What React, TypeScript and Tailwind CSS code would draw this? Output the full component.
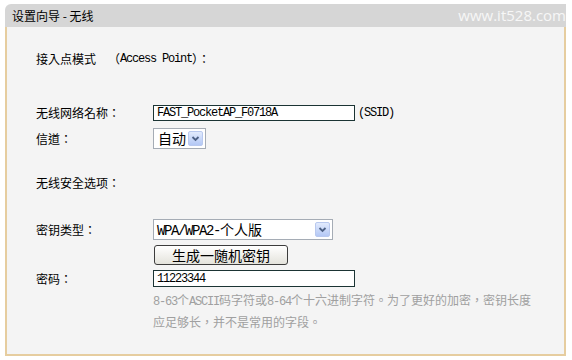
import React from "react";

const cjk = "font-['Noto_Sans_CJK_TC',sans-serif]";
const mono12 = "font-['Liberation_Mono','Noto_Sans_CJK_TC',monospace] text-[12px] tracking-[-1.2px]";
const mono14 = "font-['Liberation_Mono','Noto_Sans_CJK_TC',monospace] text-[14px] tracking-[-1.4px]";

function Arrow() {
  return (
    <span className="flex h-[15px] w-[15px] items-center justify-center rounded-[2px] border border-[#b9c9ef] bg-gradient-to-b from-[#e2ebfd] to-[#b4c8f5]">
      <svg width="9" height="7" viewBox="0 0 9 7">
        <path d="M1.5 2 L4.5 5 L7.5 2" fill="none" stroke="#4d6185" strokeWidth="1.8" />
      </svg>
    </span>
  );
}

function Label({ children }: { children: React.ReactNode }) {
  return <div className={`w-[117px] shrink-0 text-[12px] leading-[16px] text-black ${cjk}`}>{children}</div>;
}

export default function App() {
  return (
    <div className="h-[360px] w-[572px] overflow-hidden bg-white pl-[5px] pt-[4px]">
      <div className="flex h-[352px] w-[561px] flex-col">
        <div className="flex h-[23px] shrink-0 items-center justify-between rounded-tl-[6px] bg-[#d6d6d6] pl-[7px]">
          <span className={`text-[12px] text-black ${cjk}`}>设置向导 - 无线</span>
          <span className="font-['Open_Sans',sans-serif] text-[15px] leading-none text-[#f7f7f7]">www.it528.com</span>
        </div>
        <div className="flex flex-1 flex-col border-b-2 border-l-2 border-r-2 border-[#e6cd9f] bg-[#f4f4f4] pl-[29px]">
          <div className="mt-[24px] flex h-[16px] items-center text-[12px] text-black">
            <span className={cjk}>接入点模式</span>
            <span className={`ml-[12px] ${cjk}`}>（</span>
            <span className={mono12}>Access Point</span>
            <span className={cjk}>）：</span>
          </div>

          <div className="mt-[38px] flex h-[16px] items-center">
            <Label>无线网络名称：</Label>
            <div className={`flex h-[16px] w-[202px] items-center border border-[#1b3434] bg-white pl-[3px] text-black ${mono12}`}>
              FAST_PocketAP_F0718A
            </div>
            <span className={`ml-[3px] text-black ${mono12}`}>(SSID)</span>
          </div>

          <div className="mt-[7px] flex h-[21px] items-center">
            <Label>信道：</Label>
            <div className={`flex h-[21px] w-[53px] items-center justify-between border border-[#a5acb5] bg-white pl-[4px] pr-[2px] text-[14px] text-black ${cjk}`}>
              <span>自动</span>
              <Arrow />
            </div>
          </div>

          <div className="mt-[26px] flex h-[16px] items-center">
            <Label>无线安全选项：</Label>
          </div>

          <div className="mt-[28px] flex h-[21px] items-center">
            <Label>密钥类型：</Label>
            <div className="flex h-[21px] w-[180px] items-center justify-between border border-[#a5acb5] bg-white pl-[3px] pr-[2px] text-black">
              <span>
                <span className={mono14}>WPA/WPA2-</span>
                <span className={`text-[14px] ${cjk}`}>个人版</span>
              </span>
              <Arrow />
            </div>
          </div>

          <div className="mt-[5px] flex h-[20px] items-center">
            <div className="w-[118px] shrink-0" />
            <button className={`flex h-[20px] w-[134px] items-center justify-center rounded-[3px] border border-[#3c3c3c] bg-gradient-to-b from-white to-[#e4e3dc] text-[14px] leading-none text-black ${cjk}`}>
              生成一随机密钥
            </button>
          </div>

          <div className="mt-[5px] flex h-[17px] items-center">
            <Label>密码：</Label>
            <div className={`flex h-[17px] w-[202px] items-center border border-[#1b3434] bg-white pl-[3px] text-black ${mono12}`}>
              11223344
            </div>
          </div>

          <div className="mt-[3px] flex">
            <div className="w-[117px] shrink-0" />
            <div className="text-[12px] leading-[20px] text-[#a0a0a0]">
              <div>
                <span className={mono12}>8-63</span>
                <span className={cjk}>个</span>
                <span className={mono12}>ASCII</span>
                <span className={cjk}>码字符或</span>
                <span className={mono12}>8-64</span>
                <span className={cjk}>个十六进制字符。为了更好的加密，密钥长度</span>
              </div>
              <div className={cjk}>应足够长，并不是常用的字段。</div>
            </div>
          </div>
        </div>
      </div>
    </div>
  );
}
